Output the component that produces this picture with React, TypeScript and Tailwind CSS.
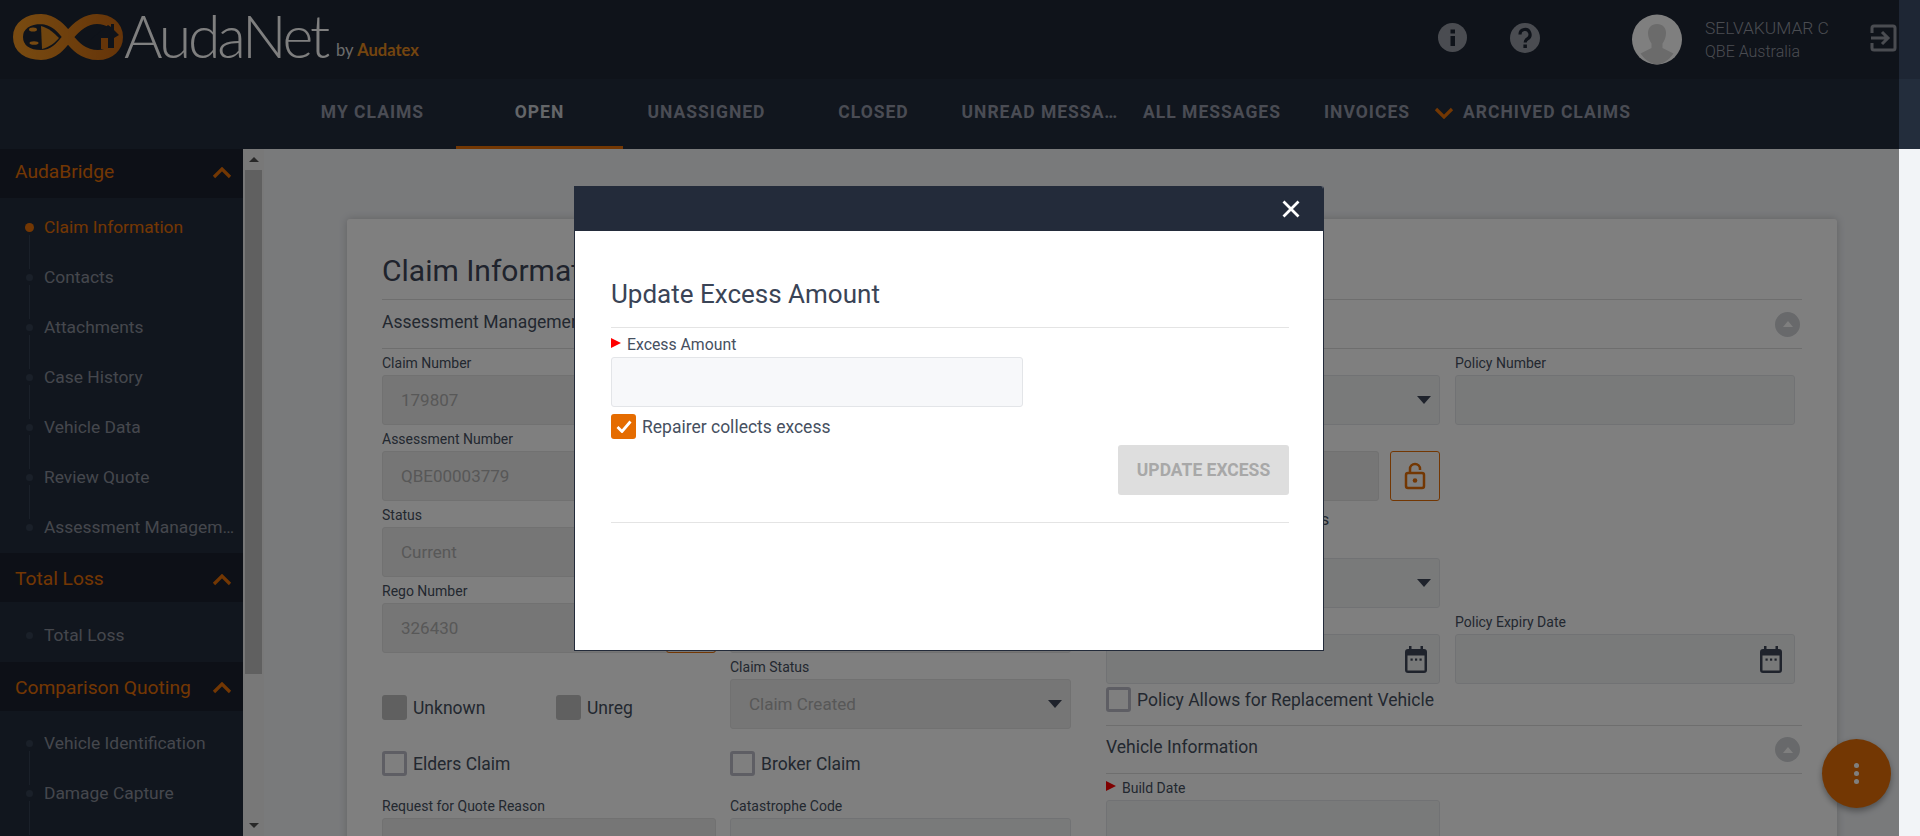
import type { ReactNode } from 'react';

function Logo() {
  return (
    <svg width="110" height="46" viewBox="0 0 110 46" className="mt-[14px] ml-[13px] shrink-0">
      <defs>
        <linearGradient id="band" x1="0" x2="1" y1="0" y2="0">
          <stop offset="0" stopColor="#f09522" />
          <stop offset="1" stopColor="#cc6a12" />
        </linearGradient>
      </defs>
      <path
        d="M5 23C5 11 16 5 28 5C41 5.500 49 15 55 23C62 32 70 41 85 41C97 41 105 33 105 23C105 12 96 5 84 5C71 5 62 14 55 23C48 32 41 41 28 41C15 41 5 35 5 23Z"
        fill="none"
        stroke="url(#band)"
        strokeWidth="10"
      />
      <path d="M28 12C36 14 42 20 46 24C42 29 36 33 29 35Z" fill="#e08a1e" />
      <ellipse cx="20" cy="15.500" rx="4" ry="2" fill="#f09522" />
      <ellipse cx="21" cy="29" rx="4.500" ry="1.800" fill="#f09522" />
      <path d="M77 26L95 11L98 13V10H101V16L106 21L101 24V34H83V26Z" fill="#1e2634" />
      <rect x="88" y="24" width="7" height="11" fill="#cc6a12" />
    </svg>
  );
}

function Chevron({ down, className }: { down?: boolean; className?: string }) {
  return (
    <svg width="20" height="12" viewBox="0 0 20 12" className={className}>
      <path
        d={down ? 'M2 2l8 8 8-8' : 'M2 10l8-8 8 8'}
        fill="none"
        stroke="#e66f06"
        strokeWidth="3.200"
      />
    </svg>
  );
}

function Caret() {
  return (
    <svg width="14" height="8" viewBox="0 0 14 8" className="-mr-[4px] shrink-0">
      <path d="M0 0h14L7 8z" fill="#3f4759" />
    </svg>
  );
}

function CalendarIcon() {
  return (
    <svg width="24" height="27" viewBox="0 0 24 27" className="-mr-[1px] shrink-0">
      <path d="M5 0h2.500v3h9V0H19v3h1a3 3 0 0 1 3 3v18a3 3 0 0 1-3 3H4a3 3 0 0 1-3-3V6a3 3 0 0 1 3-3h1z" fill="#3f4759" />
      <rect x="3.500" y="9.500" width="17" height="15" fill="#f1f3f2" />
      <rect x="6.500" y="12.500" width="2.200" height="2.200" fill="#3f4759" />
      <rect x="11" y="12.500" width="2.200" height="2.200" fill="#3f4759" />
      <rect x="15.500" y="12.500" width="2.200" height="2.200" fill="#3f4759" />
    </svg>
  );
}

function SideItem({
  label,
  active,
  line,
}: {
  label: string;
  active?: boolean;
  line?: boolean;
}) {
  return (
    <div className="relative flex h-[50px] items-center pl-[25px]">
      <div className="flex w-[19px] shrink-0">
        <span
          className={
            active
              ? 'h-[9px] w-[9px] rounded-full bg-[#e66f06]'
              : 'ml-[1px] h-[7px] w-[7px] rounded-full bg-[#344052]'
          }
        />
      </div>
      <span
        className={`truncate pt-[1px] pr-[8px] text-[17.400px] ${active ? 'text-[#e66f06]' : 'text-[#8a8f9b]'}`}
      >
        {label}
      </span>
      {line && <span className="absolute top-[33px] left-[29px] h-[34px] w-px bg-[#344052]" />}
    </div>
  );
}

function SideHeading({ label, className }: { label: string; className?: string }) {
  return (
    <div className={`flex h-[49px] items-center justify-between bg-[#1a212e] pr-[11px] pl-[15px] ${className ?? ''}`}>
      <span className="text-[19.200px] text-[#e66f06]">{label}</span>
      <Chevron />
    </div>
  );
}

function Label({ children, flag }: { children: ReactNode; flag?: boolean }) {
  return (
    <div className="flex h-[26px] items-center pt-[2px] text-[14px] leading-none whitespace-nowrap text-[#46505f]">
      {flag && <span className="mr-[6px] h-0 w-0 -translate-y-[2px] border-y-[5px] border-l-[10px] border-y-transparent border-l-[#ff0000]" />}
      {children}
    </div>
  );
}

function Field({
  label,
  value,
  disabled,
  flag,
  right,
}: {
  label?: string;
  value?: string;
  disabled?: boolean;
  flag?: boolean;
  right?: ReactNode;
}) {
  return (
    <div>
      <Label flag={flag}>{label}</Label>
      <div
        className={`flex h-[50px] items-center justify-between rounded-[3px] border pr-[12px] pl-[18px] text-[17px] text-[#b0b0b0] ${
          disabled ? 'border-[#e2e2e2] bg-[#ececec]' : 'border-[#e3e5e8] bg-[#f3f5f5]'
        }`}
      >
        <span className="pt-[1px]">{value}</span>
        {right}
      </div>
    </div>
  );
}

function Check({ label, filled, className }: { label: string; filled?: boolean; className?: string }) {
  return (
    <div className={`flex h-[25px] items-center gap-[6px] text-[17.500px] text-[#46505f] ${className ?? ''}`}>
      <span
        className={`h-[25px] w-[25px] shrink-0 rounded-[3px] ${
          filled ? 'bg-[#c0c0c0]' : 'border-[3px] border-[#bcbdc8] bg-white'
        }`}
      />
      <span className="pt-[2px] whitespace-nowrap">{label}</span>
    </div>
  );
}

function SectionHead({ title, toggle, className }: { title: string; toggle?: boolean; className?: string }) {
  return (
    <div className={`flex items-center justify-between border-b border-[#dcdcdc] pr-[2px] text-[17.500px] whitespace-nowrap text-[#46505f] ${className ?? 'h-[49px]'}`}>
      <span className="pb-[4px]">{title}</span>
      {toggle && <Toggle />}
    </div>
  );
}

function Toggle() {
  return (
    <span className="flex h-[25px] w-[25px] items-center justify-center rounded-full bg-[#d0d2d6]">
      <span className="h-0 w-0 border-x-[5px] border-b-[6px] border-x-transparent border-b-white" />
    </span>
  );
}

function Sidebar() {
  return (
    <div className="h-full w-[243px] shrink-0 overflow-hidden bg-[#232d3c]">
      <SideHeading label="AudaBridge" className="pb-[2px]" />
      <div className="pt-[4px] pb-[1px]">
        <SideItem label="Claim Information" active line />
        <SideItem label="Contacts" line />
        <SideItem label="Attachments" line />
        <SideItem label="Case History" line />
        <SideItem label="Vehicle Data" line />
        <SideItem label="Review Quote" line />
        <SideItem label="Assessment Management" />
      </div>
      <SideHeading label="Total Loss" className="pt-[4px]" />
      <div className="pt-[8px] pb-[2px]">
        <SideItem label="Total Loss" />
      </div>
      <SideHeading label="Comparison Quoting" className="pt-[3px]" />
      <div className="pt-[7px]">
        <SideItem label="Vehicle Identification" line />
        <SideItem label="Damage Capture" line />
        <SideItem label="Additional Costs" />
      </div>
    </div>
  );
}

function Scrollbar() {
  return (
    <div className="flex h-full w-[21px] shrink-0 flex-col items-center bg-[#f1f1f1]">
      <div className="flex h-[21px] w-full shrink-0 items-center justify-center">
        <span className="h-0 w-0 border-x-[5px] border-b-[5px] border-x-transparent border-b-[#505050]" />
      </div>
      <div className="h-[504px] w-[17px] bg-[#c1c1c1]" />
      <div className="mt-auto flex h-[21px] w-full shrink-0 items-center justify-center">
        <span className="h-0 w-0 border-x-[5px] border-t-[5px] border-x-transparent border-t-[#505050]" />
      </div>
    </div>
  );
}

function ClaimCard() {
  return (
    <div className="mt-[70px] ml-[83px] w-[1490px] rounded-[3px] bg-white px-[35px] shadow-[0_0_8px_rgba(0,0,0,0.2)]">
      <div className="flex h-[81px] items-center border-b border-[#dcdcdc] pt-[22px] text-[30px] text-[#3f4759]">
        Claim Information
      </div>
      <div className="flex gap-[35px]">
        <div className="w-[689px]">
          <SectionHead title="Assessment Management" />
          <div className="flex gap-[14px]">
            <div className="w-[334px]">
              <Field label="Claim Number" value="179807" disabled />
              <Field label="Assessment Number" value="QBE00003779" disabled />
              <Field label="Status" value="Current" disabled />
              <div className="relative">
                <Field label="Rego Number" value="326430" disabled />
                <span className="absolute right-0 bottom-0 h-[50px] w-[50px] rounded-[3px] border border-[#e66f06]" />
              </div>
              <div className="mt-[42px] flex">
                <Check label="Unknown" filled className="w-[174px]" />
                <Check label="Unreg" filled />
              </div>
              <Check label="Elders Claim" className="mt-[31px]" />
              <div className="mt-[16px]">
                <Field label="Request for Quote Reason" disabled />
              </div>
            </div>
            <div className="w-[341px]">
              <Field label="Assessor" disabled />
              <Field label="Assessment Type" disabled />
              <Field label="Assessment Status" disabled />
              <Field label="Repairer" disabled />
              <Field label="Claim Status" value="Claim Created" disabled right={<Caret />} />
              <Check label="Broker Claim" className="mt-[22px]" />
              <div className="mt-[16px]">
                <Field label="Catastrophe Code" />
              </div>
            </div>
          </div>
        </div>
        <div className="w-[696px]">
          <SectionHead title="Policy Information" toggle />
          <div className="flex gap-[15px]">
            <div className="w-[334px]">
              <Field label="Insurer" right={<Caret />} />
              <div className="flex items-end gap-[11px]">
                <div className="flex-1">
                  <Field label="Excess Amount" disabled />
                </div>
                <span className="flex h-[50px] w-[50px] shrink-0 items-center justify-center rounded-[3px] border border-[#e66f06]">
                  <svg width="22" height="28" viewBox="0 0 22 28">
                    <rect x="2" y="11" width="18" height="15" rx="2" fill="none" stroke="#e66f06" strokeWidth="2.500" />
                    <path d="M6 11V7a5 5 0 0 1 10 0v1" fill="none" stroke="#e66f06" strokeWidth="2.500" />
                    <circle cx="11" cy="18.500" r="2.300" fill="#e66f06" />
                  </svg>
                </span>
              </div>
              <div className="flex h-[31px] items-end pl-[32px] text-[17px] whitespace-nowrap text-[#46505f]">
                Multiple Excess Amounts
              </div>
              <div className="pt-[26px]">
                <div className="flex h-[50px] items-center justify-end rounded-[3px] border border-[#e3e5e8] bg-[#f3f5f5] pr-[8px]">
                  <svg width="14" height="8" viewBox="0 0 14 8" className="shrink-0">
                    <path d="M0 0h14L7 8z" fill="#3f4759" />
                  </svg>
                </div>
              </div>
              <Field label="Policy Start Date" right={<CalendarIcon />} />
            </div>
            <div className="w-[340px]">
              <Field label="Policy Number" />
              <div className="h-[183px]" />
              <Field label="Policy Expiry Date" right={<CalendarIcon />} />
            </div>
          </div>
          <Check label="Policy Allows for Replacement Vehicle" className="mt-[3px]" />
          <div className="mt-[13px] border-t border-[#dcdcdc]">
            <SectionHead title="Vehicle Information" toggle className="h-[48px]" />
          </div>
          <div className="w-[334px]">
            <Field label="Build Date" flag />
          </div>
        </div>
      </div>
    </div>
  );
}

function TopBar() {
  return (
    <div className="h-[149px] shrink-0 bg-[#232d3c]">
      <div className="flex h-[79px] bg-[#1e2634]">
        <Logo />
        <div className="mt-[5px] ml-px text-[59px] leading-[62px] font-light tracking-[-3.200px] text-white font-['Lato',sans-serif]">
          AudaNet
        </div>
        <div className="mt-[38px] ml-[9px] text-[16.500px] whitespace-nowrap text-[#d8d8d8] font-['Lato',sans-serif]">
          by <span className="font-bold text-[#e68a1e]">Audatex</span>
        </div>
        <div className="ml-auto flex items-start">
          <svg width="29" height="29" viewBox="0 0 29 29" className="mt-[23px] shrink-0">
            <circle cx="14.500" cy="14.500" r="14.500" fill="#9599a3" />
            <rect x="12.500" y="13" width="4.500" height="10" fill="#1e2634" />
            <rect x="12.500" y="6.500" width="4.500" height="4" fill="#1e2634" />
          </svg>
          <svg width="30" height="30" viewBox="0 0 30 30" className="mt-[23px] ml-[43px] shrink-0">
            <circle cx="15" cy="15" r="15" fill="#9599a3" />
            <path d="M10 11.500a5 5 0 1 1 7.500 4.300c-1.600 1-2.300 1.700-2.300 3.700" fill="none" stroke="#1e2634" strokeWidth="3.200" />
            <rect x="13.400" y="21.500" width="3.500" height="3.500" fill="#1e2634" />
          </svg>
          <svg width="50" height="51" viewBox="0 0 50 51" className="mt-[14px] ml-[92px] shrink-0">
            <circle cx="25" cy="25.500" r="25" fill="#ffffff" />
            <path
              d="M25 10c-6 0-9 4-9 9 0 4 1.500 8 3.500 10.500V34l-11 5.500C13 46 19 50 25 50.500c6-.5 12-4.500 16.500-11L30.500 34v-4.500C32.500 27 34 23 34 19c0-5-3-9-9-9z"
              fill="#d6d6d6"
            />
          </svg>
          <div className="mt-[17px] ml-[23px] w-[165px] leading-none">
            <div className="text-[17.400px] leading-[22px] font-light whitespace-nowrap text-[#9599a3]">SELVAKUMAR C</div>
            <div className="mt-[3px] text-[16px] leading-[20px] font-light text-[#9599a3]">QBE Australia</div>
          </div>
          <svg width="27" height="28" viewBox="0 0 27 28" className="mt-[24px] mr-[23px] shrink-0">
            <path
              d="M2 9V4a2 2 0 0 1 2-2h19a2 2 0 0 1 2 2v20a2 2 0 0 1-2 2H4a2 2 0 0 1-2-2v-5"
              fill="none"
              stroke="#9599a3"
              strokeWidth="3"
            />
            <path d="M1 14h16M12 8l6 6-6 6" fill="none" stroke="#9599a3" strokeWidth="3" />
          </svg>
        </div>
      </div>
      <div className="flex h-[70px] pl-[289px] text-[17.500px] font-bold tracking-[1px] whitespace-nowrap text-[#9499a8]">
        <div className="flex w-[167px] items-center justify-center pb-[3px]">MY CLAIMS</div>
        <div className="flex w-[167px] items-center justify-center border-b-[3px] border-[#e66f06] text-[#c9ccd3]">
          OPEN
        </div>
        <div className="flex w-[167px] items-center justify-center pb-[3px]">UNASSIGNED</div>
        <div className="flex w-[167px] items-center justify-center pb-[3px]">CLOSED</div>
        <div className="flex w-[167px] items-center justify-center pb-[3px]">
          <span className="w-[158px] truncate">UNREAD MESSAGES</span>
        </div>
        <div className="flex w-[176px] items-center justify-center pb-[3px]">ALL MESSAGES</div>
        <div className="flex w-[134px] items-center justify-center pb-[3px]">INVOICES</div>
        <div className="flex items-center gap-[9px] pb-[3px]">
          <Chevron down />
          <span>ARCHIVED CLAIMS</span>
        </div>
      </div>
    </div>
  );
}

function ExcessModal() {
  return (
    <div className="mt-[186px] ml-[574px] flex h-[465px] w-[750px] flex-col overflow-hidden rounded-tr-[3px] border border-t-0 border-[#232b3a] bg-white text-[#3f4759]">
      <div className="flex h-[45px] shrink-0 items-center justify-end bg-[#232b3a] pr-[23px]">
        <svg width="18" height="18" viewBox="0 0 18 18">
          <path d="M1.500 1.500l15 15M16.500 1.500l-15 15" stroke="#ffffff" strokeWidth="2.800" />
        </svg>
      </div>
      <div className="pr-[34px] pl-[36px]">
        <div className="flex h-[97px] items-end border-b border-[#e4e4e4] pb-[16px] text-[26px] leading-[34px] text-[#3a4456]">
          Update Excess Amount
        </div>
        <div className="flex h-[29px] items-center pt-[4px] text-[15.800px] text-[#46505f]">
          <span className="mr-[6px] h-0 w-0 -translate-y-[2px] border-y-[5px] border-l-[10px] border-y-transparent border-l-[#ff0000]" />
          Excess Amount
        </div>
        <div className="h-[50px] w-[412px] rounded-[3px] border border-[#e3e5e8] bg-[#f7f8fa]" />
        <div className="mt-[7px] flex h-[25px] items-center gap-[6px] text-[17.500px] text-[#46505f]">
          <span className="flex h-[25px] w-[25px] items-center justify-center rounded-[3px] bg-[#e56c00]">
            <svg width="16" height="13" viewBox="0 0 16 13">
              <path d="M1.500 7l4.500 4.500L14.500 1.500" fill="none" stroke="#ffffff" strokeWidth="2.800" />
            </svg>
          </span>
          <span className="pt-[2px]">Repairer collects excess</span>
        </div>
        <div className="mt-[6px] flex justify-end">
          <div className="flex h-[50px] w-[171px] items-center justify-center rounded-[3px] bg-[#dedede] text-[17.500px] font-bold text-[#a8a8a8]">
            UPDATE EXCESS
          </div>
        </div>
        <div className="mt-[27px] border-t border-[#e4e4e4]" />
      </div>
    </div>
  );
}

export default function App() {
  return (
    <div className={'relative flex h-[836px] w-[1920px] flex-col overflow-hidden bg-[#f2f4f7] font-["Roboto",sans-serif]'}>
      <TopBar />
      <div className="flex min-h-0 flex-1">
        <Sidebar />
        <Scrollbar />
        <div className="min-w-0 flex-1">
          <ClaimCard />
        </div>
      </div>
      <span className="absolute top-[739px] left-[1822px] flex h-[69px] w-[69px] flex-col items-center justify-center gap-[3px] rounded-full bg-[#e66f06] shadow-[0_3px_6px_rgba(0,0,0,0.35)]">
        <span className="h-[5px] w-[5px] rounded-full bg-white" />
        <span className="h-[5px] w-[5px] rounded-full bg-white" />
        <span className="h-[5px] w-[5px] rounded-full bg-white" />
      </span>
      <div className="absolute top-0 left-0 flex h-full w-[1899px] items-start bg-black/50">
        <ExcessModal />
      </div>
    </div>
  );
}
